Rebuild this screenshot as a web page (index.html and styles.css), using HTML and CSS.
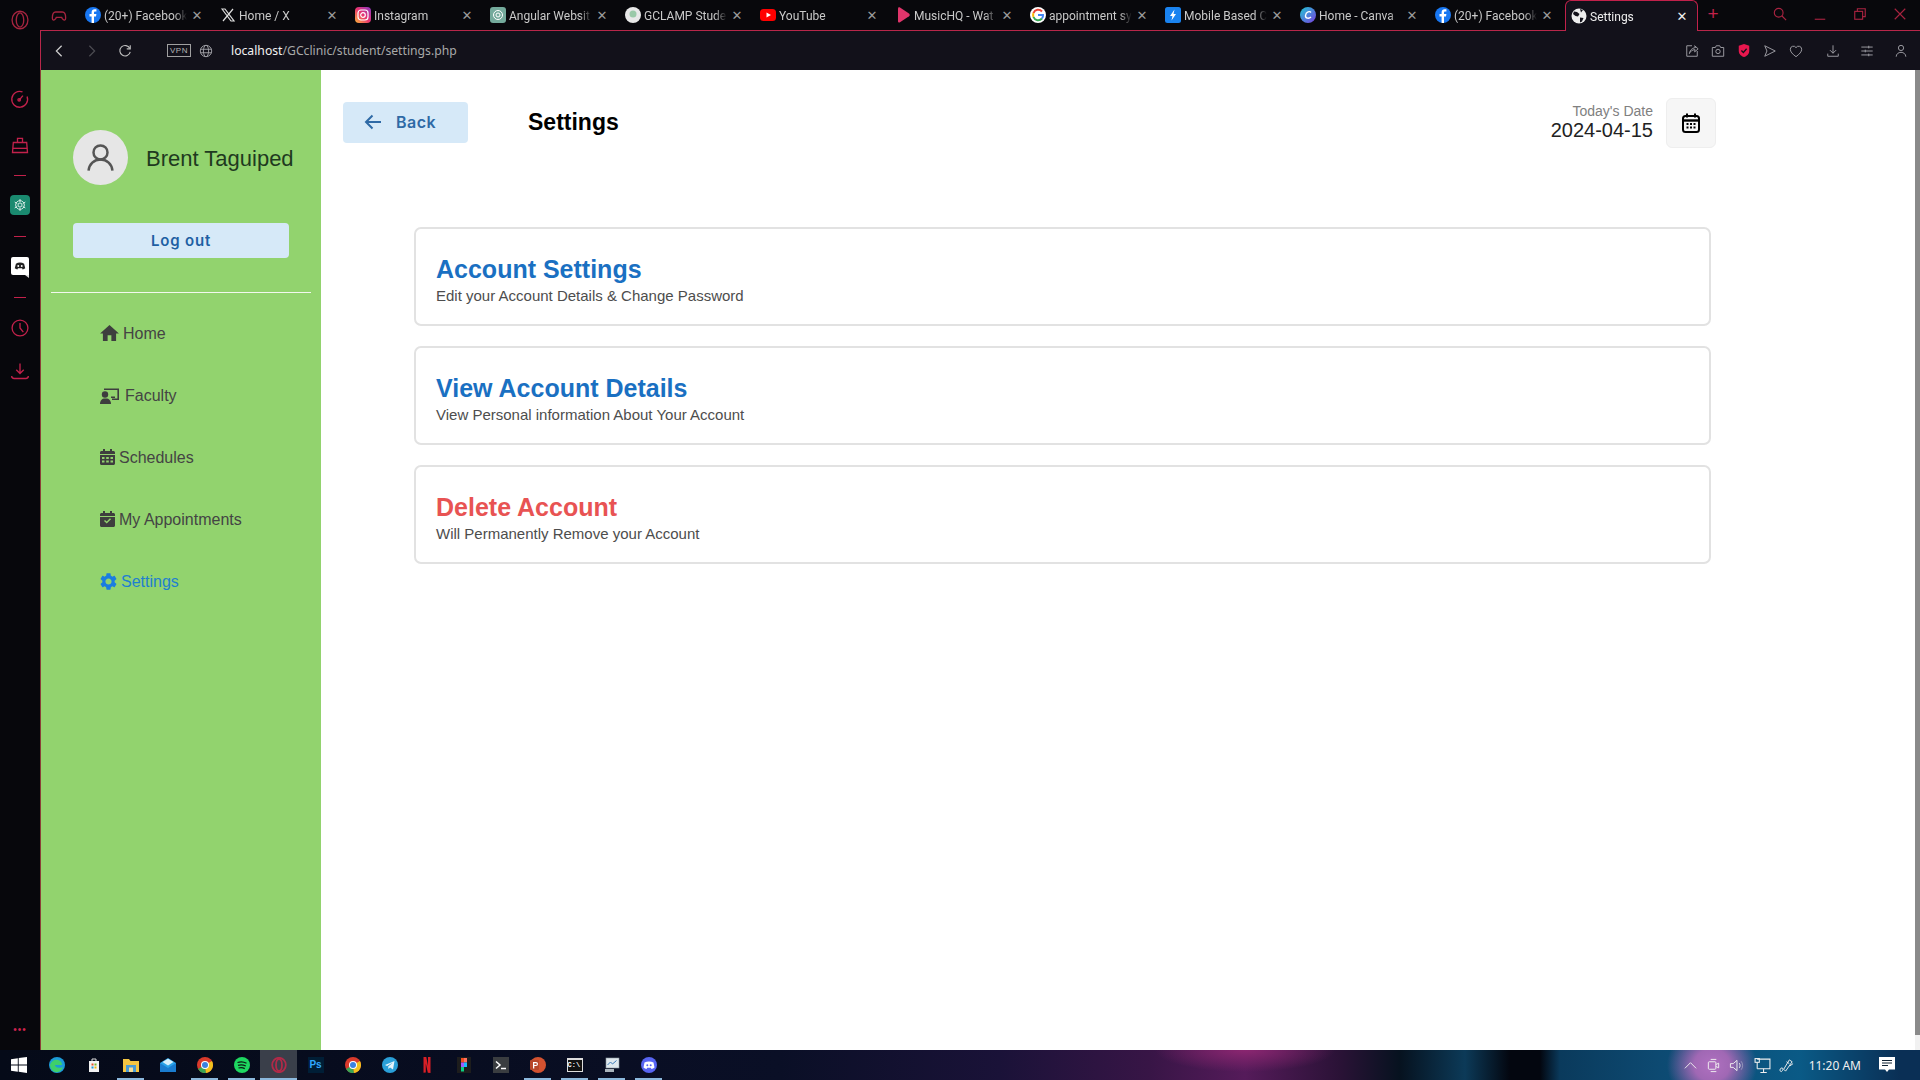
FILE: index.html
```html
<!DOCTYPE html>
<html lang="en">
<head>
  <meta charset="UTF-8" />
  <title>Settings</title>
  <link rel="stylesheet" href="styles.css">
</head>
<body>

  <div class="window">

    <!-- opera side rail -->
    <div class="rail">
      <svg class="rail-logo" viewBox="0 0 24 24"><ellipse cx="12" cy="12" rx="9.5" ry="10.5"/><ellipse cx="12" cy="12" rx="4.5" ry="8.5"/></svg>
      <svg class="rail-icon rail-speed" viewBox="0 0 24 24"><path d="M15 3.5A9.5 9.5 0 1 0 20.5 9"/><path d="M10.5 14l5-6"/><circle cx="11" cy="13" r="1.5"/></svg>
      <svg class="rail-icon rail-bag" viewBox="0 0 24 24"><path d="M4 9h16l1 12H3z"/><path d="M9 9V4h6v5"/><path d="M3.500 16h17"/></svg>
      <span class="rail-dash rail-dash-1"></span>
      <span class="rail-gpt">
        <svg viewBox="0 0 24 24"><circle cx="12" cy="12" r="6.500"/><circle cx="12" cy="12" r="3"/><path d="M12 3v5M12 16v5M4 7.500l4 2.500M16 14l4 2.500M4 16.500L8 14M16 10l4-2.500"/></svg>
      </span>
      <span class="rail-dash rail-dash-2"></span>
      <span class="rail-discord">
        <svg viewBox="0 0 24 24"><path d="M5 8c4-2.500 10-2.500 14 0l2 8c-1.500 1-3 1.500-4.500 2l-1-2h-7l-1 2C6 17.500 4.500 17 3 16z"/><circle cx="9" cy="12" r="1.600" fill="#fff"/><circle cx="15" cy="12" r="1.600" fill="#fff"/></svg>
      </span>
      <span class="rail-dash rail-dash-3"></span>
      <svg class="rail-icon rail-clock" viewBox="0 0 24 24"><circle cx="12" cy="12" r="9.500"/><path d="M12 6v6l4 5"/></svg>
      <svg class="rail-icon rail-down" viewBox="0 0 24 24"><path d="M12 3v12M7.500 10.500L12 15l4.500-4.500"/><path d="M2 18c0 2 1 3 3 3h14c2 0 3-1 3-3"/></svg>
      <span class="rail-dots">•••</span>
    </div>

    <div class="browser">

      <!-- tab strip -->
      <div class="tabstrip">
        <svg class="gx-icon" viewBox="0 0 24 24"><path d="M7 6h10c3 0 5 4 5 9 0 4-3 4-5 1l-1-2H8l-1 2c-2 3-5 3-5-1 0-5 2-9 5-9z"/></svg>

        <div class="tab">
          <svg class="fav" viewBox="0 0 16 16"><circle cx="8" cy="8" r="8" fill="#1877f2"/><path d="M9 16V9.500h2l.4-2.400H9V5.700c0-.8.300-1.200 1.300-1.200h1.100V2.300C11 2.200 10.400 2.200 9.800 2.200 7.800 2.200 6.600 3.400 6.600 5.400v1.700H4.500v2.400h2.100V16z" fill="#fff"/></svg>
          <span class="tab-title">(20+) Facebook</span><span class="tab-x">✕</span>
        </div>
        <div class="tab">
          <svg class="fav" viewBox="0 0 16 16"><path d="M2 2l9 12h3L5 2zM13 2L3 14" fill="none" stroke="#ddd" stroke-width="1.200"/></svg>
          <span class="tab-title">Home / X</span><span class="tab-x">✕</span>
        </div>
        <div class="tab">
          <svg class="fav" viewBox="0 0 16 16"><defs><linearGradient id="ig" x1="0" y1="1" x2="1" y2="0"><stop offset="0" stop-color="#fdb53a"/><stop offset=".5" stop-color="#e8336f"/><stop offset="1" stop-color="#8a3ac8"/></linearGradient></defs><rect width="16" height="16" rx="4" fill="url(#ig)"/><rect x="3" y="3" width="10" height="10" rx="3" fill="none" stroke="#fff" stroke-width="1.200"/><circle cx="8" cy="8" r="2.300" fill="none" stroke="#fff" stroke-width="1.200"/></svg>
          <span class="tab-title">Instagram</span><span class="tab-x">✕</span>
        </div>
        <div class="tab">
          <svg class="fav" viewBox="0 0 16 16"><rect width="16" height="16" rx="3" fill="#74aa9c"/><circle cx="8" cy="8" r="4.500" fill="none" stroke="#fff"/><circle cx="8" cy="8" r="2" fill="none" stroke="#fff"/></svg>
          <span class="tab-title">Angular Websit</span><span class="tab-x">✕</span>
        </div>
        <div class="tab">
          <svg class="fav" viewBox="0 0 16 16"><circle cx="8" cy="8" r="8" fill="#e8e8e8"/><circle cx="8" cy="7" r="3.500" fill="#9ac9a8"/></svg>
          <span class="tab-title">GCLAMP Stude</span><span class="tab-x">✕</span>
        </div>
        <div class="tab">
          <svg class="fav" viewBox="0 0 16 16"><rect y="2" width="16" height="12" rx="3.500" fill="#f00"/><path d="M6.500 5.500v5L11 8z" fill="#fff"/></svg>
          <span class="tab-title">YouTube</span><span class="tab-x">✕</span>
        </div>
        <div class="tab">
          <svg class="fav" viewBox="0 0 16 16"><path d="M3 1.500c0-1 1-1.500 2-1l9 6c1 .8 1 2 0 2.800l-9 6c-1 .6-2 0-2-1z" fill="#e0356b"/></svg>
          <span class="tab-title">MusicHQ - Wat</span><span class="tab-x">✕</span>
        </div>
        <div class="tab">
          <svg class="fav" viewBox="0 0 16 16"><circle cx="8" cy="8" r="8" fill="#fff"/><path d="M12 4.500A5 5 0 0 0 3.500 6" fill="none" stroke="#ea4335" stroke-width="2"/><path d="M3.500 6a5 5 0 0 0 0 4" fill="none" stroke="#fbbc05" stroke-width="2"/><path d="M3.500 10a5 5 0 0 0 8.500 1.500" fill="none" stroke="#34a853" stroke-width="2"/><path d="M12 11.500A5 5 0 0 0 13 8H8" fill="none" stroke="#4285f4" stroke-width="2"/></svg>
          <span class="tab-title">appointment sy</span><span class="tab-x">✕</span>
        </div>
        <div class="tab">
          <svg class="fav" viewBox="0 0 16 16"><rect width="16" height="16" rx="2.500" fill="#1a83f0"/><path d="M9.500 2.500L5 9h2.500l-1 4.500L11 7H8.500z" fill="#fff"/></svg>
          <span class="tab-title">Mobile Based C</span><span class="tab-x">✕</span>
        </div>
        <div class="tab">
          <svg class="fav" viewBox="0 0 16 16"><defs><linearGradient id="cv" x1="0" y1="0" x2="1" y2="1"><stop offset="0" stop-color="#1fc8d4"/><stop offset="1" stop-color="#7a3de0"/></linearGradient></defs><circle cx="8" cy="8" r="8" fill="url(#cv)"/><path d="M11 5.500C10 4 6 4.500 5.500 8.500 5.200 11.500 9 12 11 10" fill="none" stroke="#fff" stroke-width="1.400"/></svg>
          <span class="tab-title">Home - Canva</span><span class="tab-x">✕</span>
        </div>
        <div class="tab">
          <svg class="fav" viewBox="0 0 16 16"><circle cx="8" cy="8" r="8" fill="#1877f2"/><path d="M9 16V9.500h2l.4-2.400H9V5.700c0-.8.300-1.200 1.300-1.200h1.100V2.300C11 2.200 10.400 2.200 9.800 2.200 7.800 2.200 6.600 3.400 6.600 5.400v1.700H4.500v2.400h2.100V16z" fill="#fff"/></svg>
          <span class="tab-title">(20+) Facebook</span><span class="tab-x">✕</span>
        </div>
        <div class="tab tab-active">
          <svg class="fav" viewBox="0 0 16 16"><circle cx="8" cy="8" r="7.500" fill="#eee"/><path d="M3 3.500l3 .5 2.500 2L7 8.500 4.500 8 2 6zM9 9.500l3.500.5-1.500 3.500-2 1z" fill="#12111a"/><path d="M9 1l3 1-2 2.500z" fill="#12111a"/></svg>
          <span class="tab-title">Settings</span><span class="tab-x">✕</span>
        </div>

        <span class="tab-plus">+</span>
        <div class="win-btns">
          <svg viewBox="0 0 16 16"><circle cx="6.500" cy="6.500" r="5"/><path d="M10 10l5 5"/></svg>
          <svg viewBox="0 0 16 16"><path d="M2 14h12"/></svg>
          <svg viewBox="0 0 16 16"><rect x="2" y="5" width="9" height="9"/><path d="M5 5V2h9v9h-3"/></svg>
          <svg viewBox="0 0 16 16"><path d="M2 2l12 12M14 2L2 14"/></svg>
        </div>
      </div>

      <!-- address bar -->
      <div class="toolbar">
        <svg class="tool-icon tool-back" viewBox="0 0 16 16"><path d="M11 2L5 8l6 6"/></svg>
        <svg class="tool-icon tool-forward" viewBox="0 0 16 16"><path d="M5 2l6 6-6 6"/></svg>
        <svg class="tool-icon tool-reload" viewBox="0 0 16 16"><path d="M13.500 5A6 6 0 1 0 14 9"/><path d="M14 1.500V5.500H10"/></svg>
        <span class="vpn">VPN</span>
        <svg class="tool-icon tool-globe" viewBox="0 0 16 16"><circle cx="8" cy="8" r="6.500"/><ellipse cx="8" cy="8" rx="3" ry="6.500"/><path d="M1.500 6h13M1.500 10h13"/></svg>
        <span class="url"><b>localhost</b>/GCclinic/student/settings.php</span>

        <div class="tool-right">
          <svg class="tool-icon" viewBox="0 0 16 16"><path d="M8 2H2v12h12V8"/><path d="M5 11c.5-3 2-6 7-7l-1-2 4 3.500L11 9l.5-2.500C8 6.500 6 8.500 5 11z"/></svg>
          <svg class="tool-icon" viewBox="0 0 16 16"><path d="M1.500 4h3.500l1-2h4l1 2h3.500v10h-13z"/><circle cx="8" cy="8.500" r="2.500"/></svg>
          <svg class="tool-shield" viewBox="0 0 16 16"><path d="M8 .5l6 2v6c0 3.500-3 6-6 7-3-1-6-3.500-6-7v-6z" fill="#e8174e"/><path d="M5 8l2.300 2.300L11 6" fill="none" stroke="#12111a" stroke-width="1.500"/></svg>
          <svg class="tool-icon" viewBox="0 0 16 16"><path d="M2 2l12 6-12 6 2.500-6z"/></svg>
          <svg class="tool-icon" viewBox="0 0 16 16"><path d="M8 14.500C4 11.500 1.500 9 1.500 6A3.500 3.500 0 0 1 8 4.200 3.500 3.500 0 0 1 14.500 6c0 3-2.500 5.500-6.500 8.500z"/></svg>
          <svg class="tool-icon tool-gap" viewBox="0 0 16 16"><path d="M8 1.500v9M4.500 7L8 10.500 11.500 7"/><path d="M2 11v3h12v-3"/></svg>
          <svg class="tool-icon tool-gap2" viewBox="0 0 16 16"><path d="M1.500 3.500h13M1.500 8h13M1.500 12.500h13M10 2v3M6 6.500v3M10 11v3"/></svg>
          <svg class="tool-icon tool-gap2" viewBox="0 0 16 16"><circle cx="8" cy="4.500" r="3"/><path d="M2.500 14.500c0-3 2.500-5 5.500-5s5.500 2 5.500 5"/></svg>
        </div>
      </div>

      <!-- page -->
      <div class="page">

        <div class="sidebar">
          <div class="profile">
            <span class="avatar">
              <svg viewBox="0 0 24 24"><circle cx="12" cy="8.500" r="4.800"/><path d="M3.800 21c.4-4.500 3.800-7.700 8.200-7.700s7.800 3.200 8.200 7.700"/></svg>
            </span>
            <span class="profile-name">Brent Taguiped</span>
          </div>
          <a class="btn-logout">Log out</a>
          <hr class="side-line">

          <div class="menu">
            <a class="menu-item">
              <svg class="ic-home" viewBox="2 3 20 17"><path d="M10 20v-6h4v6h5v-8h3L12 3 2 12h3v8z"/></svg>Home
            </a>
            <a class="menu-item">
              <svg class="ic-faculty" viewBox="0 0 20 17"><circle cx="5" cy="7.500" r="3.200"/><path d="M0 17c0-3.500 2-5.500 5-5.500h1c3 0 5 2 5 5.500z"/><path d="M4 3V1.500h15V13h-7v-1.600h5.400V3z"/><path d="M11 9.500h4V11h-4z"/></svg>Faculty
            </a>
            <a class="menu-item">
              <svg class="ic-cal" viewBox="0 0 15 16"><path d="M3 0h2v2h5V0h2v2h1.500C14.300 2 15 2.700 15 3.500V5H0V3.500C0 2.700.7 2 1.500 2H3zM0 6h15v8.500c0 .8-.7 1.500-1.500 1.500h-12C.7 16 0 15.300 0 14.500zM2 8v2h2.500V8zm4.200 0v2h2.600V8zm4.300 0v2H13V8zM2 11.500v2h2.500v-2zm4.200 0v2h2.600v-2zm4.300 0v2H13v-2z"/></svg>Schedules
            </a>
            <a class="menu-item">
              <svg class="ic-cal" viewBox="0 0 15 16"><path d="M3 0h2v2h5V0h2v2h1.500C14.300 2 15 2.700 15 3.500V5H0V3.500C0 2.700.7 2 1.500 2H3zM0 6h15v8.500c0 .8-.7 1.500-1.500 1.500h-12C.7 16 0 15.300 0 14.500zm11 2.200l-1-1-3.300 3.300L5 8.900l-1 1 2.700 2.700z"/></svg>My Appointments
            </a>
            <a class="menu-item menu-active">
              <svg class="ic-gear" viewBox="2.500 2 19 20"><path d="M19.140 12.940c.04-.3.06-.61.06-.94 0-.32-.02-.64-.07-.94l2.030-1.580c.18-.14.23-.41.12-.61l-1.920-3.320c-.12-.22-.37-.29-.59-.22l-2.390.96c-.5-.38-1.030-.7-1.620-.94l-.36-2.540c-.04-.24-.24-.41-.48-.41h-3.840c-.24 0-.43.17-.47.41l-.36 2.540c-.59.24-1.130.57-1.620.94l-2.390-.96c-.22-.08-.47 0-.59.22L2.740 8.870c-.12.21-.08.47.12.61l2.030 1.580c-.05.3-.09.63-.09.94s.02.64.07.94l-2.030 1.580c-.18.14-.23.41-.12.61l1.920 3.320c.12.22.37.29.59.22l2.390-.96c.5.38 1.030.7 1.620.94l.36 2.540c.05.24.24.41.48.41h3.840c.24 0 .44-.17.47-.41l.36-2.540c.59-.24 1.130-.56 1.620-.94l2.390.96c.22.08.47 0 .59-.22l1.920-3.320c.12-.22.07-.47-.12-.61l-2.010-1.580zM12 15.600c-1.980 0-3.600-1.620-3.600-3.600s1.620-3.600 3.600-3.600 3.600 1.620 3.600 3.600-1.620 3.600-3.600 3.600z"/></svg>Settings
            </a>
          </div>
        </div>

        <div class="main">
          <div class="top-row">
            <a class="btn-back">
              <svg viewBox="0 0 18 16"><path d="M17 8H2M8.500 1.500L2 8l6.500 6.500"/></svg>Back
            </a>
            <span class="page-title">Settings</span>
            <div class="today">
              <span class="today-label">Today's Date</span>
              <span class="today-date">2024-04-15</span>
            </div>
            <span class="btn-cal">
              <svg viewBox="0 0 18 20"><rect x="1" y="3" width="16" height="16" rx="2.500"/><path d="M1 7.500h16" stroke-width="2.400"/><path d="M5 .5v4M13 .5v4"/><path d="M4.500 11h2M8 11h2M11.500 11h2M4.500 14.500h2M8 14.500h2M11.500 14.500h2" stroke-width="1.800"/></svg>
            </span>
          </div>

          <div class="cards">
            <div class="card">
              <div class="card-title">Account Settings</div>
              <div class="card-sub">Edit your Account Details &amp; Change Password</div>
            </div>
            <div class="card">
              <div class="card-title">View Account Details</div>
              <div class="card-sub">View Personal information About Your Account</div>
            </div>
            <div class="card">
              <div class="card-title card-danger">Delete Account</div>
              <div class="card-sub">Will Permanently Remove your Account</div>
            </div>
          </div>
        </div>

        <div class="scrollbar"><div class="scroll-thumb"></div></div>
      </div>
    </div>
  </div>

  <!-- windows taskbar -->
  <div class="taskbar">
    <div class="task task-start">
      <svg viewBox="0 0 16 16"><path d="M0 2.200l6.800-1v6.300H0zM7.700 1L16 0v7.500H7.700zM0 8.500h6.800v6.300l-6.800-1zM7.700 8.500H16V16l-8.300-1.200z" fill="#fff"/></svg>
    </div>
    <div class="task">
      <svg viewBox="0 0 16 16"><circle cx="8" cy="8" r="8" fill="#1c9bd8"/><path d="M1 8c1-4 5-6 8-5 3 .8 4 3 4 5H6c0 2 3 4 8 2-1 3-4 6-8 5C3 14 1 11 1 8z" fill="#3fd06a"/></svg>
    </div>
    <div class="task">
      <svg viewBox="0 0 16 16"><path d="M3 4h10v11H3z" fill="#f2f2f2"/><path d="M6 4V2h4v2" fill="none" stroke="#ddd"/><path d="M5.500 6.500h2v2h-2z" fill="#e8532a"/><path d="M8.500 6.500h2v2h-2z" fill="#7ab82a"/><path d="M5.500 9.500h2v2h-2z" fill="#1c9bd8"/><path d="M8.500 9.500h2v2h-2z" fill="#f5b90a"/></svg>
    </div>
    <div class="task task-open">
      <svg viewBox="0 0 16 16"><path d="M0 2h6l1.500 2H16v11H0z" fill="#f4c542"/><path d="M3 8h10v7H3z" fill="#4a9bd4"/><path d="M6 10.500h4V15H6z" fill="#f4dc92"/></svg>
    </div>
    <div class="task">
      <svg viewBox="0 0 16 16"><path d="M0 6l8-5 8 5v9H0z" fill="#29a3e8"/><path d="M0 6l8 5 8-5v9H0z" fill="#1a7ccf"/><path d="M2.500 5L8 1.800 13.500 5 8 8.500z" fill="#d6f0fb"/></svg>
    </div>
    <div class="task task-open">
      <svg viewBox="0 0 16 16"><circle cx="8" cy="8" r="8" fill="#d93a2b"/><path d="M8 8L1 12a8 8 0 0 0 8 4z" fill="#3aa655"/><path d="M8 8l6.900-4A8 8 0 0 1 9 16z" fill="#f2c01e"/><circle cx="8" cy="8" r="4" fill="#fff"/><circle cx="8" cy="8" r="3" fill="#3b82e0"/></svg>
    </div>
    <div class="task task-open">
      <svg viewBox="0 0 16 16"><circle cx="8" cy="8" r="8" fill="#1ed760"/><path d="M3.500 5.500c3-1 6.500-.7 9 .8M4 8.300c2.500-.8 5.500-.5 7.800.7M4.500 11c2-.6 4.500-.4 6.300.6" fill="none" stroke="#0b1a12" stroke-width="1.300"/></svg>
    </div>
    <div class="task task-open task-current">
      <svg viewBox="0 0 16 16" fill="none" stroke="#b02a48" stroke-width="1.800"><ellipse cx="8" cy="8" rx="6.800" ry="7.200"/><ellipse cx="8" cy="8" rx="3" ry="6"/></svg>
    </div>
    <div class="task">
      <span class="ps">Ps</span>
    </div>
    <div class="task">
      <svg viewBox="0 0 16 16"><circle cx="8" cy="8" r="8" fill="#d93a2b"/><path d="M8 8L1 12a8 8 0 0 0 8 4z" fill="#3aa655"/><path d="M8 8l6.900-4A8 8 0 0 1 9 16z" fill="#f2c01e"/><circle cx="8" cy="8" r="4" fill="#fff"/><circle cx="8" cy="8" r="3" fill="#3b82e0"/></svg>
    </div>
    <div class="task">
      <svg viewBox="0 0 16 16"><circle cx="8" cy="8" r="8" fill="#2a9fd8"/><path d="M3 8l9.500-4-1.500 8.500-3-2-1.500 1.500-.3-2.500L11 5.500 5 9z" fill="#e6f4fb"/></svg>
    </div>
    <div class="task">
      <svg viewBox="0 0 16 16"><path d="M4.500 0h2.800l1.700 9V0h2.500v16l-2.700-.3L6.800 6.500V15.500l-2.300.3z" fill="#d81f26"/></svg>
    </div>
    <div class="task">
      <svg viewBox="0 0 16 16"><rect x="1" width="14" height="16" fill="#1d1d1d"/><path d="M5 1h3v4.500H5z" fill="#f24e1e"/><path d="M8 1h3v4.500H8z" fill="#ff7262"/><path d="M5 5.500h3V10H5z" fill="#a259ff"/><path d="M8 5.500h3V10H8z" fill="#1abcfe"/><path d="M5 10h3v4.500H5z" fill="#0acf83"/></svg>
    </div>
    <div class="task">
      <svg viewBox="0 0 16 16"><rect width="16" height="16" fill="#3a3d40"/><path d="M3 4.500L7 8l-4 3.500" fill="none" stroke="#fff" stroke-width="1.500"/><path d="M8 11.500h5" stroke="#fff" stroke-width="1.500"/></svg>
    </div>
    <div class="task task-open">
      <svg viewBox="0 0 16 16"><circle cx="8" cy="8" r="8" fill="#d35230"/><rect y="3" width="9" height="10" rx="1" fill="#b7472a"/><path d="M3 5h3a2 2 0 0 1 0 4H4.300v2.500H3zM4.300 6.200v1.700H6a.85.85 0 0 0 0-1.700z" fill="#fff"/></svg>
    </div>
    <div class="task task-open">
      <span class="cmd">C:\</span>
    </div>
    <div class="task task-open">
      <svg viewBox="0 0 16 16"><rect x="2" y="1" width="13" height="10" fill="#dfe8ee" stroke="#8a97a0" stroke-width=".6"/><path d="M3.500 8l3-3 2 2 4-3.500" fill="none" stroke="#3d7cb8"/><path d="M1 12h9v3H1z" fill="#aab4bc"/></svg>
    </div>
    <div class="task task-open">
      <svg viewBox="0 0 16 16"><circle cx="8" cy="8" r="8" fill="#5865f2"/><path d="M3.500 5.500c2.800-1.500 6.200-1.500 9 0l1 5c-1 .8-2 1.200-3 1.500l-.7-1.200H6.200L5.500 12c-1-.3-2-.7-3-1.500z" fill="#fff"/><circle cx="6.300" cy="8.200" r="1" fill="#5865f2"/><circle cx="9.700" cy="8.200" r="1" fill="#5865f2"/></svg>
    </div>

    <div class="tray">
      <svg class="tray-icon" viewBox="0 0 16 16"><path d="M2 11l6-6 6 6"/></svg>
      <svg class="tray-icon" viewBox="0 0 16 16"><path d="M5 1.500h6M5 14.500h6"/><rect x="2.500" y="4" width="8" height="8" rx="1"/><path d="M10.500 7l3-1.500v5l-3-1.500"/></svg>
      <svg class="tray-icon" viewBox="0 0 16 16"><path d="M1.500 6v4h3l4 3.500v-11l-4 3.500z"/><path d="M11 5.500c1 1.500 1 3.500 0 5"/><path d="M13 3.500c2 2.500 2 6.500 0 9" opacity=".4"/></svg>
      <svg class="tray-icon tray-net" viewBox="0 0 16 16"><path d="M3 2h12v9H3"/><rect x="1" y="1.500" width="4" height="3.500"/><path d="M3 5v6M9 11v3.500M6 14.500h6"/></svg>
      <svg class="tray-icon" viewBox="0 0 16 16"><path d="M1 13c0-2 2-3 3-2s-1 3.500-1.500 3.500S1 14 1 13zM5 12l6-10 3 2-7 10zM8 4l3 2M11.500 8.500L15 6"/></svg>
      <span class="clock">11:20 AM</span>
      <svg class="notif" viewBox="0 0 16 16"><path d="M0 0h16v12.500H10L8 15l-2-2.500H0z" fill="#fff"/><path d="M3 3.500h10M3 6h10M3 8.500h6" stroke="#123" stroke-width="1"/></svg>
    </div>
  </div>

</body>
</html>
```

FILE: styles.css
```css
* {
  box-sizing: border-box;
}

body {
  margin: 0;
  height: 100vh;
  overflow: hidden;
  display: flex;
  flex-direction: column;
  font-family: "Liberation Sans", Arial, sans-serif;
  background-color: #08080c;
}

a {
  display: block;
  text-decoration: none;
}

svg {
  display: block;
  flex-shrink: 0;
}

.window {
  display: flex;
  height: 1050px;
}

/* side rail */
.rail {
  position: relative;
  width: 40px;
  background-color: #07070c;
  flex-shrink: 0;
}

.rail-logo {
  position: absolute;
  left: 10px;
  top: 9px;
  width: 20px;
  height: 22px;
  fill: none;
  stroke: #a5243f;
  stroke-width: 1.6;
}

.rail-icon {
  position: absolute;
  left: 10px;
  width: 20px;
  height: 20px;
  fill: none;
  stroke: #c2214b;
  stroke-width: 1.6;
}

.rail-speed { top: 89px; }
.rail-bag { top: 135px; }
.rail-clock { top: 318px; }
.rail-down { top: 361px; }

.rail-dash {
  position: absolute;
  left: 14px;
  width: 12px;
  height: 1px;
  background-color: #c2214b;
}

.rail-dash-1 { top: 175px; }
.rail-dash-2 { top: 236px; }
.rail-dash-3 { top: 297px; }

.rail-gpt {
  position: absolute;
  left: 10px;
  top: 195px;
  width: 20px;
  height: 20px;
  border-radius: 4px;
  background-color: #1a8a70;
  padding: 2px;
}

.rail-gpt svg {
  fill: none;
  stroke: #e8f5f1;
  stroke-width: 1.3;
}

.rail-discord {
  position: absolute;
  left: 11px;
  top: 257px;
  width: 18px;
  height: 18px;
  border-radius: 2px 2px 0 2px;
  background-color: #fff;
  padding: 2px;
}

.rail-discord::after {
  content: "";
  position: absolute;
  right: 0;
  bottom: -3px;
  border-top: 3px solid #ddd;
  border-left: 4px solid transparent;
}

.rail-discord svg {
  fill: #222;
}

.rail-dots {
  position: absolute;
  left: 0;
  right: 0;
  top: 1023px;
  text-align: center;
  font-size: 10px;
  line-height: 14px;
  letter-spacing: 1px;
  color: #d0234f;
}

.browser {
  flex-grow: 1;
  min-width: 0;
  display: flex;
  flex-direction: column;
}

/* tabs */
.tabstrip {
  height: 31px;
  display: flex;
  align-items: stretch;
  border-bottom: 1px solid #b8274a;
  background-color: #08080c;
}

.gx-icon {
  width: 16px;
  height: 16px;
  margin: 8px 13px 0 11px;
  fill: none;
  stroke: #a5243f;
  stroke-width: 2;
}

.tab {
  width: 133px;
  margin-right: 2px;
  padding-left: 5px;
  padding-right: 9px;
  display: flex;
  align-items: center;
  font-family: Roboto, sans-serif;
  font-size: 12px;
  color: #c9c9c9;
}

.fav {
  width: 16px;
  height: 16px;
  margin-right: 3px;
}

.tab-title {
  flex-grow: 1;
  min-width: 0;
  margin-top: 2px;
  white-space: nowrap;
  overflow: hidden;
  -webkit-mask-image: linear-gradient(to right, #000 85%, transparent 100%);
  mask-image: linear-gradient(to right, #000 85%, transparent 100%);
}

.tab-x {
  width: 14px;
  margin-left: 3px;
  font-family: "DejaVu Sans", sans-serif;
  font-size: 13px;
  color: #9a9a9a;
  text-align: center;
}

.tab-active {
  height: 31px;
  border: 1px solid #c2214b;
  border-bottom: none;
  border-radius: 6px 6px 0 0;
  background-color: #12111a;
  color: #eee;
  padding-left: 5px;
  padding-right: 8px;
}

.tab-active .tab-x {
  color: #eee;
}

.tab-plus {
  width: 26px;
  font-family: "Liberation Sans", sans-serif;
  font-size: 19px;
  line-height: 27px;
  text-align: center;
  color: #c2214b;
}

.win-btns {
  margin-left: auto;
  width: 193px;
  display: flex;
  justify-content: space-between;
  padding: 7px 13px 0 46px;
}

.win-btns svg {
  width: 14px;
  height: 14px;
  fill: none;
  stroke: #a82340;
  stroke-width: 1.3;
}

/* toolbar */
.toolbar {
  height: 39px;
  display: flex;
  align-items: center;
  background-color: #12111a;
  border-left: 1px solid #b8274a;
  padding-left: 11px;
}

.tool-icon {
  width: 14px;
  height: 14px;
  fill: none;
  stroke: #9d9da3;
  stroke-width: 1.1;
}

.tool-back {
  stroke: #d0d0d0;
  stroke-width: 1.4;
}

.tool-forward {
  margin-left: 19px;
  stroke: #4c4c52;
  stroke-width: 1.4;
}

.tool-reload {
  margin-left: 19px;
  stroke: #bdbdbd;
  stroke-width: 1.3;
}

.vpn {
  margin-left: 35px;
  width: 24px;
  height: 13px;
  border: 1px solid #a0a0a0;
  font-size: 8px;
  line-height: 11px;
  letter-spacing: 0.5px;
  text-align: center;
  color: #b5b5b5;
}

.tool-globe {
  margin-left: 8px;
}

.url {
  margin-left: 18px;
  font-family: "Noto Sans", sans-serif;
  font-size: 12.2px;
  color: #a9a9a9;
}

.url b {
  font-weight: 400;
  color: #f2f2f2;
}

.tool-right {
  margin-left: auto;
  padding-right: 12px;
  display: flex;
  align-items: center;
  gap: 12px;
}

.tool-shield {
  width: 14px;
  height: 15px;
}

.tool-gap {
  margin-left: 11px;
}

.tool-gap2 {
  margin-left: 8px;
}

/* page */
.page {
  flex-grow: 1;
  min-height: 0;
  display: flex;
  background-color: #fff;
  border-left: 1px solid #8c4038;
}

.sidebar {
  width: 280px;
  flex-shrink: 0;
  padding: 60px 10px 0;
  background-color: #92d36e;
}

.profile {
  display: flex;
  align-items: center;
  padding-left: 22px;
}

.avatar {
  width: 55px;
  height: 55px;
  border-radius: 50%;
  background-color: #e6e6e6;
  padding: 10px;
}

.avatar svg {
  fill: none;
  stroke: #555;
  stroke-width: 1.7;
}

.profile-name {
  margin: 1px 0 0 18px;
  padding-top: 1px;
  font-size: 22px;
  color: #1f3a1f;
  white-space: nowrap;
}

.btn-logout {
  margin: 38px 22px 0;
  height: 35px;
  line-height: 35px;
  border-radius: 4px;
  background-color: #d6e9f8;
  font-family: Inter, sans-serif;
  font-size: 15px;
  font-weight: 600;
  letter-spacing: 0.8px;
  text-align: center;
  color: #1e5fa3;
}

.side-line {
  margin: 34px 0 0;
  border: none;
  height: 1px;
  background-color: #f2f8ee;
}

.menu {
  margin-top: 10px;
}

.menu-item {
  height: 62px;
  padding-left: 49px;
  display: flex;
  align-items: center;
  font-size: 16px;
  color: #444;
  fill: #3e3e3e;
}

.menu-item svg {
  margin-right: 4px;
}

.ic-home {
  width: 19px;
  height: 16px;
  margin-top: -2px;
}

.ic-faculty {
  width: 20px;
  height: 17px;
  margin-top: -2px;
  margin-right: 5px !important;
}

.ic-cal {
  width: 15px;
  height: 16px;
  margin-top: -2px;
}

.ic-gear {
  width: 17px;
  height: 17px;
  margin-top: -2px;
}

.menu-active {
  color: #1f7fd0;
  fill: #1a7de0;
}

.main {
  flex-grow: 1;
  min-width: 0;
}

.top-row {
  height: 50px;
  margin-top: 28px;
  padding: 0 199px 0 22px;
  display: flex;
  align-items: center;
}

.btn-back {
  width: 125px;
  height: 41px;
  margin-bottom: 2px;
  padding-left: 21px;
  display: flex;
  align-items: center;
  border-radius: 4px;
  background-color: #d6e9f8;
  font-family: Inter, sans-serif;
  font-size: 16px;
  font-weight: 600;
  letter-spacing: 0.5px;
  color: #2f6aa6;
}

.btn-back svg {
  width: 18px;
  height: 16px;
  margin-right: 14px;
  fill: none;
  stroke: #2f6aa6;
  stroke-width: 2;
}

.page-title {
  margin-left: 60px;
  margin-bottom: 2px;
  font-size: 23px;
  font-weight: 700;
  color: #000;
}

.today {
  margin-left: auto;
  margin-bottom: 2px;
  display: flex;
  flex-direction: column;
  align-items: flex-end;
}

.today-label {
  font-size: 14px;
  line-height: 16px;
  color: #808080;
}

.today-date {
  font-size: 20px;
  line-height: 22px;
  color: #222;
}

.btn-cal {
  width: 50px;
  height: 50px;
  margin-left: 13px;
  padding: 14px 15px 0;
  border: 1px solid #eee;
  border-radius: 6px;
  background-color: #f6f6f6;
}

.btn-cal svg {
  width: 18px;
  height: 20px;
  fill: none;
  stroke: #000;
  stroke-width: 2;
}

.cards {
  margin-top: 79px;
  padding: 0 204px 0 93px;
  display: flex;
  flex-direction: column;
  gap: 20px;
}

.card {
  height: 99px;
  padding: 25px 20px 0;
  border: 2px solid #e2e2e2;
  border-radius: 7px;
}

.card-title {
  font-size: 25px;
  line-height: 30px;
  font-weight: 700;
  color: #1a70c2;
}

.card-danger {
  color: #e85353;
}

.card-sub {
  margin-top: 3px;
  font-size: 15px;
  line-height: 18px;
  color: #4d4d4d;
}

.scrollbar {
  width: 5px;
  flex-shrink: 0;
  background-color: #f1f1f1;
}

.scroll-thumb {
  height: 965px;
  background-color: #8a8a8a;
}

/* taskbar */
.taskbar {
  height: 30px;
  display: flex;
  background:
    radial-gradient(ellipse 90px 22px at 1245px 0, #8a2670 0%, transparent 100%),
    radial-gradient(ellipse 45px 40px at 1712px 50%, #b070c0 0%, #a068b4 40%, transparent 100%),
    linear-gradient(to right,
      #050a18 0, #0a0f26 780px, #1a1238 1000px, #381546 1150px, #551b5a 1245px,
      #2a1236 1340px, #06121f 1400px, #0c3a58 1465px, #03060f 1510px, #03060f 1540px,
      #0a3a5c 1560px, #0d4a72 1660px, #0a5a86 1800px, #0a2f55 1900px);
}

.task {
  position: relative;
  width: 37px;
  display: flex;
  align-items: center;
  justify-content: center;
}

.task svg {
  width: 16px;
  height: 16px;
}

.task-start {
  width: 38px;
}

.task-open::after {
  content: "";
  position: absolute;
  left: 5px;
  right: 5px;
  bottom: 0;
  height: 2px;
  background-color: #8cb8dc;
}

.task-current {
  background-color: #3a3f4a;
}

.task-current::after {
  left: 0;
  right: 0;
}

.ps {
  width: 16px;
  height: 16px;
  background-color: #001e36;
  font-size: 10px;
  font-weight: 700;
  line-height: 16px;
  text-align: center;
  color: #31a8ff;
}

.cmd {
  width: 16px;
  height: 14px;
  background-color: #111;
  border: 1px solid #ddd;
  border-top-width: 2px;
  font-family: "Liberation Mono", monospace;
  font-size: 7px;
  font-weight: 700;
  line-height: 10px;
  color: #fff;
  white-space: nowrap;
}

.tray {
  margin-left: auto;
  padding-right: 25px;
  display: flex;
  align-items: center;
  color: #fff;
}

.tray-icon {
  width: 15px;
  height: 15px;
  margin-left: 8px;
  fill: none;
  stroke: #f0f0f0;
  stroke-width: 1;
}

.tray-net {
  width: 17px;
  height: 17px;
  margin-left: 10px;
}

.clock {
  margin-left: 15px;
  font-family: "Noto Sans", sans-serif;
  font-size: 12px;
  white-space: nowrap;
  color: #f0f0f0;
}

.notif {
  width: 16px;
  height: 16px;
  margin-left: 18px;
}
```
